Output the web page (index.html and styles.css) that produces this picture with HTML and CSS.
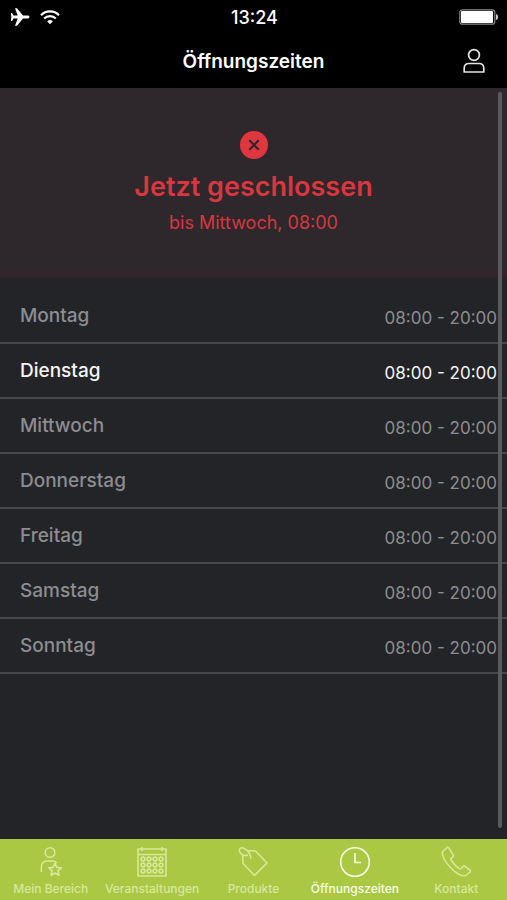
FILE: index.html
```html
<!DOCTYPE html>
<html lang="de">
<head>
<meta charset="utf-8">
<meta name="viewport" content="width=device-width, initial-scale=1">
<title>Öffnungszeiten</title>
<link rel="stylesheet" href="styles.css">
</head>
<body>
<div class="app">
  <header class="top">
    <div class="status-bar">
      <div class="signals">
        <svg width="20" height="18" viewBox="0 0 20 18" fill="#fff" aria-hidden="true"><path d="M19.500 9c0-.9-.8-1.500-2-1.500h-4.500L7 .3H5l2.700 7.200H3.400L2.200 5H.8l.6 4-.6 4h1.400l1.200-2.500h4.300L5 17.700h2l6-7.200h4.500c1.200 0 2-.6 2-1.500z"/></svg>
        <svg width="20" height="16" viewBox="0 0 20 16" fill="none" stroke="#fff" stroke-width="2.200" aria-hidden="true"><path d="M1 6.200a12.500 12.500 0 0 1 18 0M4.200 9.500a8.200 8.200 0 0 1 11.600 0"/><path d="M10 15.300 7.200 12.400a4 4 0 0 1 5.600 0z" fill="#fff" stroke="none"/></svg>
      </div>
      <time class="clock">13:24</time>
      <svg class="battery" width="40" height="16" viewBox="0 0 40 16" aria-hidden="true"><rect x=".8" y=".8" width="35" height="14.400" rx="2.500" fill="none" stroke="#888" stroke-width="1.200"/><rect x="2" y="2" width="32" height="12" rx="1" fill="#fff"/><path d="M37 5c1.600.5 2 1.500 2 3s-.4 2.500-2 3z" fill="#ccc"/></svg>
    </div>
    <div class="title-bar">
      <h1 class="title">Öffnungszeiten</h1>
      <button class="profile" type="button" aria-label="Profil">
        <svg width="22" height="26" viewBox="0 0 22 26" fill="none" stroke="#e4e4e4" stroke-width="1.700"><circle cx="11" cy="7" r="5.400"/><path d="M1.200 24v-3.500c0-3 1.800-5 4.800-5h10c3 0 4.800 2 4.800 5V24z" stroke-linejoin="round"/></svg>
      </button>
    </div>
  </header>

  <main class="content">
    <section class="banner">
      <svg class="closed-icon" width="28" height="28" viewBox="0 0 28 28" aria-hidden="true"><circle cx="14" cy="14" r="14" fill="#df373f"/><path d="m9.300 9.300 9.400 9.400m0-9.400-9.400 9.400" stroke="#2e262a" stroke-width="2"/></svg>
      <h2 class="state">Jetzt geschlossen</h2>
      <p class="until">bis Mittwoch, 08:00</p>
    </section>
    <table class="hours">
      <tbody>
        <tr><th scope="row">Montag</th><td>08:00 - 20:00</td></tr>
        <tr class="today"><th scope="row">Dienstag</th><td>08:00 - 20:00</td></tr>
        <tr><th scope="row">Mittwoch</th><td>08:00 - 20:00</td></tr>
        <tr><th scope="row">Donnerstag</th><td>08:00 - 20:00</td></tr>
        <tr><th scope="row">Freitag</th><td>08:00 - 20:00</td></tr>
        <tr><th scope="row">Samstag</th><td>08:00 - 20:00</td></tr>
        <tr><th scope="row">Sonntag</th><td>08:00 - 20:00</td></tr>
      </tbody>
    </table>
    <div class="scrollbar"></div>
  </main>

  <nav class="tabs">
    <a class="tab" href="#bereich">
      <svg width="32" height="32" viewBox="0 0 32 32" aria-hidden="true"><circle cx="15" cy="6.500" r="4.800"/><path d="M6.300 26v-4.500c0-4 2.200-6.500 6-6.500h5c2 0 3.500.7 4.600 2M20 17.300l1.900 4.100 4.400.5-3.300 3 1 4.400-4-2.300-3.900 2.300 1-4.400-3.300-3 4.400-.5z"/></svg>
      <span>Mein Bereich</span>
    </a>
    <a class="tab" href="#veranstaltungen">
      <svg width="32" height="32" viewBox="0 0 32 32" aria-hidden="true"><path d="M2 3h28v27H2zM2 8.500h28M6 1v4M26 1v4"/><g><circle cx="7" cy="13" r="1.900"/><circle cx="13" cy="13" r="1.900"/><circle cx="19" cy="13" r="1.900"/><circle cx="25" cy="13" r="1.900"/><circle cx="7" cy="19" r="1.900"/><circle cx="13" cy="19" r="1.900"/><circle cx="19" cy="19" r="1.900"/><circle cx="25" cy="19" r="1.900"/><circle cx="7" cy="25" r="1.900"/><circle cx="13" cy="25" r="1.900"/><circle cx="19" cy="25" r="1.900"/><circle cx="25" cy="25" r="1.900"/></g></svg>
      <span>Veranstaltungen</span>
    </a>
    <a class="tab" href="#produkte">
      <svg width="32" height="32" viewBox="0 0 32 32" aria-hidden="true"><path d="M9.500 4.500 18.500 5 30 17 17.500 29.500 6 17.500l-.3-8M11 9C8.500 10 4.500 9.500 2.800 6 1.500 3 4 .8 6.800 2.200 10.500 4 13.500 8 14 12.500"/></svg>
      <span>Produkte</span>
    </a>
    <a class="tab active" href="#zeiten" aria-current="page">
      <svg width="32" height="32" viewBox="0 0 32 32" aria-hidden="true"><circle cx="16" cy="16" r="14.300"/><path d="M16 7v9.500h6"/></svg>
      <span>Öffnungszeiten</span>
    </a>
    <a class="tab" href="#kontakt">
      <svg width="32" height="32" viewBox="0 0 32 32" aria-hidden="true"><path d="M6.500 2 2.800 5.500C1.500 8 3.500 14 9.500 20.500S21 31 26 29.500l4-3.500c.8-.8.600-1.500 0-2l-5-3.700c-.8-.6-1.500-.5-2 .2l-1.800 2c-.6.600-1.200.6-2 .1-3-2-6-5.100-8.200-8.600-.4-.7-.3-1.200.2-1.700l1.700-1.500c.7-.6.700-1.200.2-2L9 2.200C8.300 1.200 7.300 1.200 6.500 2z"/></svg>
      <span>Kontakt</span>
    </a>
  </nav>
</div>
</body>
</html>
```

FILE: styles.css
```css
* {
  box-sizing: border-box;
}

body {
  margin: 0;
  background: #232428;
  color: #fff;
  font-family: Inter, "Liberation Sans", sans-serif;
}

.app {
  display: flex;
  flex-direction: column;
  min-height: 100vh;
}

.top {
  background: #000;
}

.status-bar,
.title-bar {
  display: grid;
  grid-template-columns: 1fr auto 1fr;
  align-items: center;
}

.status-bar {
  height: 34px;
  padding: 0 8px 0 10px;
}

.signals {
  display: flex;
  align-items: center;
  gap: 10px;
}

.clock {
  font-size: 18px;
  font-weight: 500;
}

.battery {
  justify-self: end;
}

.title-bar {
  height: 54px;
  padding: 0 22px;
}

.title {
  grid-column: 2;
  margin: 0;
  font-size: 19px;
  font-weight: 600;
}

.profile {
  display: flex;
  justify-self: end;
  padding: 0;
  border: 0;
  background: none;
}

.content {
  position: relative;
  flex: 1;
}

.banner {
  display: flex;
  flex-direction: column;
  align-items: center;
  height: 192px;
  padding-top: 43px;
  background: linear-gradient(#2e272b 94%, #33252b 97%, #232428);
  color: #d8373f;
}

.state {
  margin: 10px 0 0;
  font-size: 27px;
  font-weight: 600;
  line-height: 36px;
}

.until {
  margin: 5px 0 0;
  font-size: 18px;
  line-height: 26px;
}

.hours {
  width: 100%;
  margin-top: 9px;
  border-collapse: separate;
  border-spacing: 0;
  color: #8c8d90;
}

.hours th,
.hours td {
  height: 55px;
  border-bottom: 2px solid #47484c;
  line-height: 24px;
}

.hours th {
  padding: 0 0 0 20px;
  font-size: 19px;
  font-weight: 500;
  text-align: left;
}

.hours td {
  padding: 4px 10px 0 0;
  font-size: 17px;
  text-align: right;
}

.hours .today {
  color: #f4f4f5;
}

.scrollbar {
  position: absolute;
  top: 4px;
  right: 5px;
  bottom: 11px;
  width: 4px;
  border-radius: 2px;
  background: #5a5a5e;
}

.tabs {
  display: grid;
  grid-template-columns: repeat(5, 1fr);
  height: 61px;
  background: #aac843;
}

.tab {
  display: flex;
  flex-direction: column;
  align-items: center;
  gap: 3px;
  padding-top: 7px;
  color: #d6e99b;
  font-size: 12px;
  font-weight: 500;
  line-height: 16px;
  text-decoration: none;
  white-space: nowrap;
}

.tab svg {
  fill: none;
  stroke: currentColor;
  stroke-width: 1.6;
  stroke-linejoin: round;
}

.tab.active {
  color: #f7fce6;
}
```
